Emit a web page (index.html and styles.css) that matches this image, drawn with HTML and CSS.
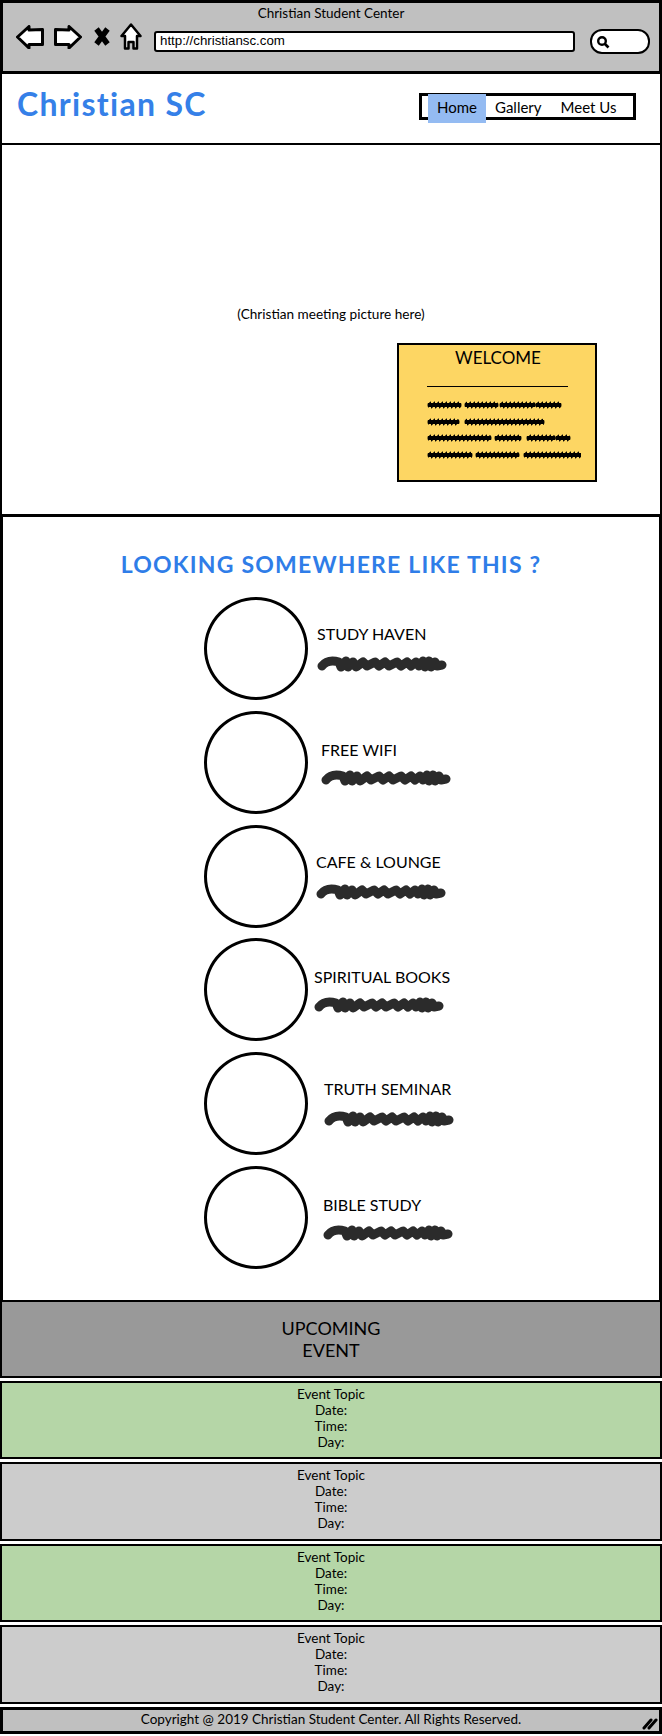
FILE: index.html
```html
<!DOCTYPE html>
<html lang="en">
<head>
    <meta charset="UTF-8">
    <title>Christian Student Center</title>
    <link rel="stylesheet" href="styles.css">
</head>
<body>
<svg class="defs" width="0" height="0">
    <symbol id="scribble" viewBox="0 0 130 20">
        <path d="M5 12 C9 7 15 6 22 8 L24 13 L29 7 L31 13 L36 8 L39 13 L46 8 L50 12 L58 8 L62 12 L68 8 L72 12 L80 8 L84 12 L90 8 L94 12 L99 8 L102 12 L106 7 L108 13 L112 7 L114 13 L118 8 L120 12 L125 11" fill="none" stroke="#2b2b2b" stroke-width="9" stroke-linecap="round" stroke-linejoin="round"/>
    </symbol>
    <pattern id="ink" width="4" height="10" patternUnits="userSpaceOnUse">
        <rect x="0" y="3" width="4" height="4" fill="#000"/>
        <path d="M-1 9 L5 1" stroke="#000" stroke-width="2.4"/>
    </pattern>
</svg>

<div class="browser">
    <div class="browser-title">Christian Student Center</div>
    <div class="browser-bar">
        <svg class="nav-icon back" width="28" height="24" viewBox="0 0 28 24"><path d="M1.5 12 L13 1.5 L13 5 L26.5 4.5 L26.5 19.5 L13 19.5 L13 23 Z" fill="#fff" stroke="#000" stroke-width="3" stroke-linejoin="round"/></svg>
        <svg class="nav-icon forward" width="28" height="24" viewBox="0 0 28 24"><path d="M26.5 12 L15 1.5 L15 5 L1.5 4.5 L1.5 19.5 L15 19.5 L15 23 Z" fill="#fff" stroke="#000" stroke-width="3" stroke-linejoin="round"/></svg>
        <svg class="nav-icon stop" width="18" height="21" viewBox="0 0 18 21"><path d="M3.5 3 L14.5 18 M14.5 3 L3.5 18" fill="none" stroke="#000" stroke-width="5.5"/></svg>
        <svg class="nav-icon home" width="22" height="27" viewBox="0 0 22 27"><path d="M11 1.5 L20.5 13 L17 13 L17 25.5 L13.5 25.5 L13.5 19 L8.5 19 L8.5 25.5 L5 25.5 L5 13 L1.5 13 Z" fill="#fff" stroke="#000" stroke-width="2.5" stroke-linejoin="round"/></svg>
        <div class="url">http://christiansc.com</div>
        <div class="search">
            <svg width="14" height="14" viewBox="0 0 14 14"><circle cx="6" cy="6" r="3.8" fill="none" stroke="#000" stroke-width="2.4"/><path d="M9 9 L12.5 12.5" stroke="#000" stroke-width="2.6"/></svg>
        </div>
    </div>
</div>

<header class="site-head">
    <div class="logo">Christian SC</div>
    <nav class="menu">
        <a class="active">Home</a>
        <a>Gallery</a>
        <a>Meet Us</a>
    </nav>
</header>

<section class="hero">
    <p class="hero-note">(Christian meeting picture here)</p>
    <div class="welcome">
        <div class="welcome-title">WELCOME</div>
        <hr>
        <svg class="scr-line" width="154" height="10"><path d="M4 5H31M41 5H68M76 5H105M112 5H131"/></svg>
        <svg class="scr-line" width="154" height="10"><path d="M4 5H29M41 5H114"/></svg>
        <svg class="scr-line" width="154" height="10"><path d="M4 5H61M71 5H91M103 5H125M132 5H140"/></svg>
        <svg class="scr-line" width="154" height="10"><path d="M4 5H42M52 5H89M100 5H151"/></svg>
    </div>
</section>

<section class="features">
    <h2>LOOKING SOMEWHERE LIKE THIS ?</h2>
    <div class="feature">
        <div class="circle"></div>
        <div class="info"><div class="info-name">STUDY HAVEN</div><svg class="scribble" width="130" height="20"><use href="#scribble"/></svg></div>
    </div>
    <div class="feature">
        <div class="circle"></div>
        <div class="info"><div class="info-name">FREE WIFI</div><svg class="scribble" width="130" height="20"><use href="#scribble"/></svg></div>
    </div>
    <div class="feature">
        <div class="circle"></div>
        <div class="info"><div class="info-name">CAFE &amp; LOUNGE</div><svg class="scribble" width="130" height="20"><use href="#scribble"/></svg></div>
    </div>
    <div class="feature">
        <div class="circle"></div>
        <div class="info"><div class="info-name">SPIRITUAL BOOKS</div><svg class="scribble" width="130" height="20"><use href="#scribble"/></svg></div>
    </div>
    <div class="feature">
        <div class="circle"></div>
        <div class="info"><div class="info-name">TRUTH SEMINAR</div><svg class="scribble" width="130" height="20"><use href="#scribble"/></svg></div>
    </div>
    <div class="feature">
        <div class="circle"></div>
        <div class="info"><div class="info-name">BIBLE STUDY</div><svg class="scribble" width="130" height="20"><use href="#scribble"/></svg></div>
    </div>
</section>

<div class="upcoming">UPCOMING<br>EVENT</div>

<div class="event green">Event Topic<br>Date:<br>Time:<br>Day:</div>
<div class="event grey">Event Topic<br>Date:<br>Time:<br>Day:</div>
<div class="event green">Event Topic<br>Date:<br>Time:<br>Day:</div>
<div class="event grey">Event Topic<br>Date:<br>Time:<br>Day:</div>

<footer class="foot">
    Copyright @ 2019 Christian Student Center. All Rights Reserved.
    <svg class="grip" width="16" height="14" viewBox="0 0 16 14"><path d="M2 12 L9 4 M7 12 L14 4" stroke="#000" stroke-width="3" stroke-linecap="round"/></svg>
</footer>
</body>
</html>
```

FILE: styles.css
```css
* {
    box-sizing: border-box;
}

body {
    margin: 0;
    width: 662px;
    height: 1736px;
    overflow: hidden;
    background: #fff;
    color: #000;
    font-family: "Lato", "Noto Sans", sans-serif;
    font-size: 14px;
}

.defs {
    position: absolute;
}

.browser {
    height: 74px;
    background: #c0c0c0;
    border: 3px solid #000;
}

.browser-title {
    text-align: center;
    font-size: 13.5px;
    line-height: 16px;
    padding-top: 2px;
}

.browser-bar {
    display: flex;
    align-items: center;
    height: 32px;
    margin-top: 4px;
    padding-left: 13px;
}

.nav-icon {
    flex: none;
    margin-bottom: 9px;
}

.back {
    margin-right: 10px;
}

.forward {
    margin-right: 11px;
}

.stop {
    margin-right: 9px;
}

.home {
    margin-right: 12px;
}

.url {
    width: 421px;
    height: 21px;
    margin-right: 15px;
    padding-left: 4px;
    background: #fff;
    border: 2.5px solid #000;
    border-radius: 3px;
    font-family: "Liberation Sans", sans-serif;
    font-size: 13.3px;
    line-height: 15px;
}

.search {
    width: 60px;
    height: 25px;
    padding: 4px 0 0 4px;
    background: #fff;
    border: 2.5px solid #000;
    border-radius: 12px;
}

.site-head {
    display: flex;
    justify-content: space-between;
    align-items: center;
    height: 69px;
    padding: 0 24px 4px 15px;
    border-left: 2px solid #000;
    border-right: 2px solid #000;
}

.logo {
    margin-bottom: 7px;
    color: #3580e8;
    font-size: 32px;
    font-weight: 700;
    letter-spacing: 1.3px;
}

.menu {
    display: flex;
    width: 217px;
    height: 27px;
    padding-left: 6px;
    border: 3px solid #000;
    font-size: 15px;
    line-height: 23px;
}

.menu a {
    padding: 0 9px;
}

.menu a:last-child {
    margin-left: 1px;
}

.menu .active {
    height: 29px;
    margin-top: -2px;
    padding-top: 2px;
    background: #94bbf2;
}

.hero {
    position: relative;
    height: 374px;
    border: 2px solid #000;
    border-bottom-width: 3px;
}

.hero-note {
    margin: 0;
    padding-top: 161px;
    text-align: center;
    font-size: 13.6px;
}

.welcome {
    position: absolute;
    left: 395px;
    top: 198px;
    width: 200px;
    height: 139px;
    padding: 2px 26px 0 28px;
    background: #fdd663;
    border: 2px solid #000;
}

.welcome-title {
    text-align: center;
    font-size: 17px;
    line-height: 22px;
}

.welcome hr {
    width: 141px;
    margin: 17px 0 13px;
    border: 0;
    border-top: 1.5px solid #000;
}

.scr-line {
    display: block;
    margin-bottom: 6.5px;
    fill: none;
    stroke: url(#ink);
    stroke-width: 7;
    stroke-linecap: round;
}

.features {
    height: 783px;
    padding-top: 33px;
    border-left: 3px solid #000;
    border-right: 3px solid #000;
}

.features h2 {
    margin: 0 0 14px;
    text-align: center;
    color: #2f7de8;
    font-size: 23px;
    line-height: 28px;
    font-weight: 700;
    letter-spacing: 1.2px;
}

.feature {
    display: flex;
    align-items: center;
    height: 113.7px;
    padding-left: 201px;
}

.circle {
    flex: none;
    width: 104px;
    height: 103px;
    background: #fff;
    border: 3px solid #000;
    border-radius: 50%;
}

.info {
    margin: 1px 0 0 9px;
}

.info-name {
    font-size: 16px;
    line-height: 20px;
    margin-bottom: 10px;
}

.scribble {
    display: block;
}

.feature:nth-of-type(even) .info-name {
    margin: 2px 0 8px;
}

.feature:nth-of-type(2) .info { margin-left: 13px; }
.feature:nth-of-type(3) .info { margin-left: 8px; }
.feature:nth-of-type(4) .info { margin-left: 6px; }
.feature:nth-of-type(5) .info { margin-left: 16px; }
.feature:nth-of-type(6) .info { margin-left: 15px; }

.upcoming {
    height: 78px;
    padding-top: 15px;
    text-align: center;
    background: #999;
    border: 2px solid #000;
    font-size: 18px;
    line-height: 22px;
}

.event {
    height: 78.4px;
    margin-top: 3px;
    padding-top: 3px;
    text-align: center;
    border: 2px solid #000;
    font-size: 13.5px;
    line-height: 16px;
}

.green {
    background: #b5d6a7;
}

.grey {
    background: #ccc;
}

.foot {
    position: relative;
    height: 27.4px;
    margin-top: 3px;
    text-align: center;
    background: #c0c0c0;
    border: 3px solid #000;
    font-size: 13.5px;
    line-height: 19px;
}

.grip {
    position: absolute;
    right: 1px;
    bottom: 1px;
}
```
